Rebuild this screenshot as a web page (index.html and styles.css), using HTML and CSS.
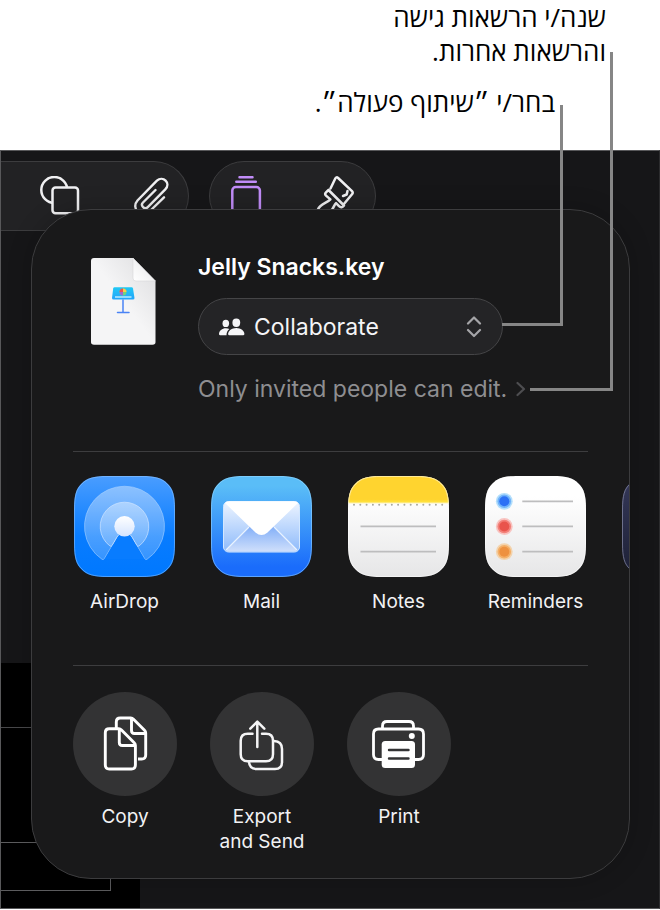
FILE: index.html
```html
<!DOCTYPE html>
<html lang="he">
<head>
    <meta charset="UTF-8">
    <meta name="viewport" content="width=device-width, initial-scale=1.0">
    <title>Jelly Snacks.key</title>
    <link rel="stylesheet" href="styles.css">
</head>
<body>
    <div class="figure">
        <div class="callouts" dir="rtl">
            <p class="callout">שנה/י הרשאות גישה<br>והרשאות אחרות.</p>
            <p class="callout callout-share">בחר/י ״שיתוף פעולה״.</p>
        </div>

        <div class="device">
            <div class="slide"><div class="slide-row"></div><div class="slide-box"></div></div>

            <div class="toolbar">
                <div class="pill pill-left">
                    <button class="tool" aria-label="Shapes">
                        <svg width="40" height="40" viewBox="0 0 40 40" fill="none" stroke="#f0f0f2" stroke-width="2.5">
                            <circle cx="14.3" cy="14" r="13"/>
                            <rect x="12.5" y="11.6" width="25.5" height="25.6" rx="3" fill="#222224"/>
                        </svg>
                    </button>
                    <button class="tool" aria-label="Attach">
                        <svg width="40" height="40" viewBox="0 0 40 40" fill="none" stroke="#f0f0f2" stroke-width="2.4" stroke-linecap="round">
                            <path d="M21.5 14L9 26.5c-3 3.200 1.600 7.800 4.800 4.600L31.300 13.300c6-6-2.400-14.200-8.400-8.600L3.500 24.500c-7 8 4 19 11.500 11.500L30 21.300"/>
                        </svg>
                    </button>
                </div>
                <div class="pill pill-right">
                    <button class="tool" aria-label="Animate">
                        <svg width="40" height="40" viewBox="0 0 40 40" fill="none" stroke="#c18cf8" stroke-width="2.5" stroke-linecap="round">
                            <path d="M13.500 1.200h13M10.300 5.700h19.500"/>
                            <rect x="6.300" y="11" width="27.600" height="34" rx="3.500"/>
                        </svg>
                    </button>
                    <button class="tool" aria-label="Format">
                        <svg width="40" height="40" viewBox="0 0 40 40" fill="none" stroke="#f0f0f2" stroke-width="2.5" stroke-linecap="round" stroke-linejoin="round">
                            <path d="M14.500 12.500L19.300 2.500q1.100-2 2.800-.5L36 15.200q1.500 1.700 0 3L27.500 28.500"/>
                            <path d="M31.500 15l-.8 3.500-3.700 1.500"/>
                            <path d="M12.500 14L28 29.500c-1.500 2-3.400 2.200-5 .6l-3-3c-1.600 1.300-2 4-4.400 7.200M12.500 14l-2.500 2.400q-1.600 1.600 0 3.200l4.400 3.800C11 27.200 4 27.700 2 33.500"/>
                        </svg>
                    </button>
                </div>
            </div>

            <div class="sheet">
                <div class="doc">
                    <svg class="doc-icon" width="65" height="87" viewBox="0 0 65 87">
                        <defs>
                            <linearGradient id="paper" x1="0" y1="1" x2="1" y2="0"><stop offset=".5" stop-color="#f5f5f6"/><stop offset="1" stop-color="#dcdcde"/></linearGradient>
                            <linearGradient id="fold" x1="0" y1="1" x2="1" y2="0"><stop offset="0" stop-color="#fff"/><stop offset=".5" stop-color="#f2f2f3"/></linearGradient>
                            <linearGradient id="podium" x1="0" y1="0" x2="0" y2="1"><stop offset="0" stop-color="#20c8f4"/><stop offset="1" stop-color="#22a4fb"/></linearGradient>
                        </defs>
                        <path d="M3 0h39l22.500 23v61q0 2.700-3 2.700H3q-3 0-3-2.700V3Q0 0 3 0z" fill="url(#paper)"/>
                        <path d="M42 0l22.500 23H45q-3 0-3-3z" fill="url(#fold)" stroke="#d6d6d8" stroke-width=".6"/>
                        <path d="M23.500 29.300h17q1.200 0 1.500 1.200l1.500 9.500q0 1.500-1.500 1.500H22.500q-1.500 0-1.500-1.500l1.200-9.500q.2-1.200 1.300-1.200z" fill="url(#podium)"/>
                        <path d="M24 39h16.500" stroke="#b9eafd" stroke-width="1.500"/>
                        <circle cx="32" cy="34" r="3.500" fill="#73d37c"/>
                        <path d="M32 34v-3.500a3.500 3.500 0 0 0-3.500 3.500z" fill="#f0524f"/>
                        <path d="M32 34h-3.500a3.500 3.500 0 0 0 3.500 3.500z" fill="#9c69cf"/>
                        <path d="M32 34v-3.500a3.500 3.500 0 0 1 3.500 3.500z" fill="#f3ce4c"/>
                        <path d="M32 42v12.500M26.500 54.600h11.500" stroke="#4a83f5" stroke-width="1.500" stroke-linecap="round"/>
                    </svg>
                    <div class="doc-info">
                        <h1 class="doc-name">Jelly Snacks.key</h1>
                        <label class="mode">
                            <svg width="26" height="18" viewBox="0 0 26 18" fill="#f5f5f7">
                                <ellipse cx="6.800" cy="5.400" rx="3.300" ry="3.600"/>
                                <ellipse cx="17.300" cy="4.700" rx="3.900" ry="4.200"/>
                                <path d="M1.200 17.300Q0 17.300 0 16c0-3.200 3.200-5.800 6.800-5.800q2 0 3.600.8c-2 1.500-3 3.600-2.900 6.300z"/>
                                <path d="M10.400 17.300q-1.300 0-1.300-1.300c0-3.300 3.700-6.100 8.200-6.100s8.100 2.800 8.100 6.100q0 1.300-1.300 1.300z"/>
                            </svg>
                            <select class="mode-select" aria-label="Sharing mode">
                                <option>Collaborate</option>
                                <option>Send Copy</option>
                            </select>
                            <svg width="16" height="22" viewBox="0 0 16 22" fill="none" stroke="#a5a5a8" stroke-width="2.200" stroke-linecap="round" stroke-linejoin="round">
                                <path d="M2 7.500L8 1.500l6 6M2 14l6 6 6-6"/>
                            </svg>
                        </label>
                        <a class="access" href="#">Only invited people can edit.
                            <svg width="10" height="16" viewBox="0 0 10 16" fill="none" stroke="#4d4d50" stroke-width="2.200" stroke-linecap="round" stroke-linejoin="round">
                                <path d="M1.500 2l6.500 6-6.500 6"/>
                            </svg>
                        </a>
                    </div>
                </div>

                <hr class="divider">

                <div class="apps">
                    <button class="app">
                        <svg width="101" height="101" viewBox="0 0 101 101">
                            <defs>
                                <clipPath id="tile"><path d="M34 0H67C82 0 88 2 93.500 7.500C99 13 101 19 101 34V67C101 82 99 88 93.500 93.500C88 99 82 101 67 101H34C19 101 13 99 7.500 93.500C2 88 0 82 0 67V34C0 19 2 13 7.500 7.500C13 2 19 0 34 0Z"/></clipPath>
                                <path id="tile-edge" d="M34 .5H67C82 .5 88 2.500 93 8C98.500 13 100.500 19 100.500 34V67C100.500 82 98.500 88 93 93C88 98.500 82 100.500 67 100.500H34C19 100.500 13 98.500 8 93C2.500 88 .5 82 .5 67V34C.5 19 2.500 13 8 8C13 2.500 19 .5 34 .5Z" fill="none"/>
                                <linearGradient id="airdrop" x1="0" y1="0" x2="0" y2="1"><stop offset="0" stop-color="#4a9dff"/><stop offset=".6" stop-color="#087cff"/><stop offset="1" stop-color="#0078ff"/></linearGradient>
                                <linearGradient id="wave" x1="0" y1="0" x2="0" y2="1"><stop offset="0" stop-color="#fff" stop-opacity=".4"/><stop offset="1" stop-color="#fff" stop-opacity=".2"/></linearGradient>
                                <linearGradient id="core" x1="0" y1="0" x2="0" y2="1"><stop offset="0" stop-color="#fff"/><stop offset="1" stop-color="#d4e4ff"/></linearGradient>
                            </defs>
                            <g clip-path="url(#tile)">
                                <path d="M0 0h101v101H0z" fill="url(#airdrop)"/>
                                <path d="M28 83.300A40 40 0 1 1 73 83.300q-1.500 1-2.500-1L57 59.500H44L30.500 82.300q-1 2-2.500 1z" fill="url(#wave)" stroke="#a7d0ff" stroke-opacity=".6"/>
                                <path d="M36 70A24.300 24.300 0 1 1 65 70q-1.200 1-2.200-.7L57 59.500H44L38.200 69.300q-1 1.700-2.200.7z" fill="url(#wave)" stroke="#cfe4ff" stroke-opacity=".7"/>
                                <path d="M45 59L31 83h39L56 59z" fill="#087cff"/>
                                <circle cx="50.500" cy="50.300" r="10.200" fill="url(#core)"/>
                            </g>
                            <use href="#tile-edge" stroke="#9cccff" stroke-opacity=".5"/>
                        </svg>
                        <span class="app-name">AirDrop</span>
                    </button>
                    <button class="app">
                        <svg width="101" height="101" viewBox="0 0 101 101">
                            <defs>
                                <linearGradient id="mail" x1="0" y1="0" x2="0" y2="1"><stop offset=".1" stop-color="#5abdf7"/><stop offset=".9" stop-color="#1a6cfb"/></linearGradient>
                                <linearGradient id="letter" x1="0" y1="0" x2="0" y2="1"><stop offset="0" stop-color="#eef5ff"/><stop offset="1" stop-color="#8dbafb"/></linearGradient>
                                <linearGradient id="letter-base" x1="0" y1="0" x2="0" y2="1"><stop offset="0" stop-color="#84b0f8"/><stop offset="1" stop-color="#cfdffb"/></linearGradient>
                            </defs>
                            <g clip-path="url(#tile)">
                                <path d="M0 0h101v101H0z" fill="url(#mail)"/>
                                <rect x="12.500" y="25.500" width="76" height="50.500" rx="5" fill="url(#letter)" stroke="#d2e7ff"/>
                                <path d="M15 74L38 51h25L86 74q-1 1.500-3 1.500H18q-2 0-3-1.500z" fill="url(#letter-base)"/>
                                <path d="M15 74L38 51M86 74L63 51" stroke="#e9f3ff" stroke-width="1.200"/>
                                <path d="M14 27q1.500-1.700 4-1.700h65q2.500 0 4 1.700L56.500 56.500q-6 5-12 0z" fill="#fff"/>
                            </g>
                            <use href="#tile-edge" stroke="#9fdcff" stroke-opacity=".5"/>
                        </svg>
                        <span class="app-name">Mail</span>
                    </button>
                    <button class="app">
                        <svg width="101" height="101" viewBox="0 0 101 101">
                            <defs>
                                <linearGradient id="page" x1="0" y1="0" x2="0" y2="1"><stop offset=".2" stop-color="#fff"/><stop offset="1" stop-color="#e6e6e7"/></linearGradient>
                                <linearGradient id="band" x1="0" y1="0" x2="0" y2="1"><stop offset=".85" stop-color="#ffd42f"/><stop offset=".93" stop-color="#ffe03a"/><stop offset="1" stop-color="#fff4b8"/></linearGradient>
                            </defs>
                            <g clip-path="url(#tile)">
                                <path d="M0 0h101v101H0z" fill="url(#page)"/>
                                <path d="M0 0h101v27.500H0z" fill="url(#band)"/>
                                <path d="M6 28.800h90" stroke="#a9a9a0" stroke-width="2" stroke-linecap="round" stroke-dasharray="0 6.300"/>
                                <path d="M12.500 50.400h75.500M12.500 75.600h75.500" stroke="#bdbdbe" stroke-width="1.800"/>
                            </g>
                            <use href="#tile-edge" stroke="#fff" stroke-opacity=".5"/>
                        </svg>
                        <span class="app-name">Notes</span>
                    </button>
                    <button class="app">
                        <svg width="101" height="101" viewBox="0 0 101 101">
                            <g clip-path="url(#tile)">
                                <path d="M0 0h101v101H0z" fill="url(#page)"/>
                                <circle cx="19.300" cy="25.300" r="8.400" fill="#b3defb"/><circle cx="19.300" cy="25.300" r="6.800" fill="#6fb2fa"/><circle cx="19.300" cy="25.300" r="5" fill="#2c70f5"/>
                                <circle cx="19.300" cy="50.500" r="8.400" fill="#f8c3c0"/><circle cx="19.300" cy="50.500" r="6.800" fill="#f38079"/><circle cx="19.300" cy="50.500" r="5" fill="#e9544c"/>
                                <circle cx="19.300" cy="75.700" r="8.400" fill="#f3d3ad"/><circle cx="19.300" cy="75.700" r="6.800" fill="#f4af67"/><circle cx="19.300" cy="75.700" r="5" fill="#ee9140"/>
                                <path d="M37.300 25.300H88M37.300 50.400H88M37.300 75.600H88" stroke="#bdbdbe" stroke-width="1.800"/>
                            </g>
                            <use href="#tile-edge" stroke="#fff" stroke-opacity=".5"/>
                        </svg>
                        <span class="app-name">Reminders</span>
                    </button>
                    <button class="app" aria-label="More">
                        <svg width="101" height="101" viewBox="0 0 101 101">
                            <defs>
                                <linearGradient id="night" x1="0" y1="0" x2="0" y2="1"><stop offset="0" stop-color="#353859"/><stop offset="1" stop-color="#1d2035"/></linearGradient>
                            </defs>
                            <g clip-path="url(#tile)"><path d="M0 0h101v101H0z" fill="url(#night)"/></g>
                            <use href="#tile-edge" stroke="#8a8da8" stroke-opacity=".7"/>
                        </svg>
                    </button>
                </div>

                <hr class="divider">

                <div class="actions">
                    <button class="action">
                        <span class="disc">
                            <svg width="104" height="104" viewBox="0 0 104 104" fill="none" stroke="#fff" stroke-width="2.900" stroke-linejoin="round">
                                <path d="M43.300 36v-6q0-4 4-4h10.500q1.500 0 2.700 1.200l11 11q1.200 1.200 1.200 2.900V63q0 4-4 4H65M58.500 26.500v12q0 3 3 3h11"/>
                                <path d="M36.300 36.800h9.500q1.500 0 2.700 1.200l12.700 12.700q1.200 1.200 1.200 2.900V73q0 4-4 4H36.300q-4 0-4-4V40.800q0-4 4-4zM46.300 37v13.500q0 3 3 3H62"/>
                            </svg>
                        </span>
                        <span class="app-name">Copy</span>
                    </button>
                    <button class="action">
                        <span class="disc">
                            <svg width="104" height="104" viewBox="0 0 104 104" fill="none" stroke="#f5f5f6" stroke-width="2.500" stroke-linecap="round" stroke-linejoin="round">
                                <path d="M42.500 41.700h-4.800q-7 0-7 7v13.500q0 7 7 7H56q7 0 7-7V48.700q0-7-7-7h-4"/>
                                <path d="M47.300 55V30M40.300 36.700l7-7 7 7"/>
                                <path d="M64 49q8 .3 8 8V70q0 7-7 7H46.500q-7 0-7.500-7" stroke-linecap="butt"/>
                            </svg>
                        </span>
                        <span class="app-name">Export<br>and Send</span>
                    </button>
                    <button class="action">
                        <span class="disc">
                            <svg width="104" height="104" viewBox="0 0 104 104" fill="none" stroke="#fff" stroke-width="2.800" stroke-linejoin="round">
                                <path d="M35.500 37v-3q0-4.500 4.500-4.500h22q4.500 0 4.500 4.500v3"/>
                                <path d="M35 67.500h-3.500q-5 0-5-5V42q0-5 5-5h40q5 0 5 5v20.500q0 5-5 5H68"/>
                                <rect x="34.700" y="49" width="33.300" height="27" rx="3.500" fill="#fff" stroke="none"/>
                                <path d="M42 58h19.500M42 66.500h19.500" stroke="#333334" stroke-width="2.400" stroke-linecap="round"/>
                                <circle cx="64.800" cy="44" r="3" fill="#fff" stroke="none"/>
                            </svg>
                        </span>
                        <span class="app-name">Print</span>
                    </button>
                </div>
            </div>
        </div>

        <div class="leader leader-access"></div>
        <div class="leader leader-share"></div>
    </div>
</body>
</html>
```

FILE: styles.css
```css
* {
    box-sizing: border-box;
}

body {
    margin: 0;
    background: #fff;
    color: #000;
    font-family: Inter, "Liberation Sans", sans-serif;
}

.figure {
    position: relative;
    display: flex;
    flex-direction: column;
    min-height: 100vh;
    padding-bottom: 1px;
}

/* Callouts */
.callouts {
    min-height: 150px;
    padding-right: 54px;
    font-family: "Open Sans", "Noto Sans", "Liberation Sans", sans-serif;
    font-size: 26px;
    line-height: 34px;
}

.callout {
    margin: 0 0 17px;
}

.callout-share {
    margin-right: 51px;
}

.leader {
    position: absolute;
    border: solid #868686;
    border-width: 0 3px 3px 0;
}

.leader-access {
    top: 52px;
    right: 47px;
    width: 83px;
    height: 339px;
}

.leader-share {
    top: 105px;
    right: 97px;
    width: 61px;
    height: 221px;
}

/* Device */
.device {
    position: relative;
    z-index: 0;
    flex: 1;
    padding-bottom: 28px;
    background: #161618;
    border: 1px solid #58585a;
    border-right-color: #2c2c2e;
}

.slide {
    position: absolute;
    z-index: -1;
    left: 0;
    bottom: 0;
    width: 139px;
    height: 245px;
    padding-top: 64px;
    background: #000;
}

.slide-row {
    height: 115px;
    border-top: 1px solid #48484a;
}

.slide-box {
    width: 110px;
    height: 49px;
    border: solid #5c5c5e;
    border-width: 1px 1px 1px 0;
}

.toolbar {
    display: flex;
    gap: 20px;
    padding-top: 10px;
}

.pill {
    display: flex;
    height: 70px;
    padding-top: 14px;
    background: #222224;
    border: 1px solid #3c3c3e;
    border-radius: 35px;
}

.pill-left {
    gap: 54px;
    padding-left: 39px;
    padding-right: 14px;
    border-left: none;
    border-radius: 0 35px 35px 0;
}

.pill-right {
    gap: 50px;
    padding-left: 16px;
    padding-right: 19px;
}

button {
    display: flex;
    padding: 0;
    background: none;
    border: none;
    color: #f2f2f4;
    font: inherit;
    cursor: pointer;
}

.tool {
    height: 40px;
}

/* Share sheet */
.sheet {
    position: relative;
    margin: -22px 29px 0 30px;
    overflow: hidden;
    background: #19191a;
    border: 1px solid #3c3c3e;
    border-radius: 60px;
    box-shadow: 0 0 24px rgba(0, 0, 0, 0.2);
}

.doc {
    display: flex;
    gap: 42px;
    padding: 42px 126px 47px 59px;
}

.doc-icon {
    flex: none;
    margin-top: 6px;
}

.doc-info {
    flex: 1;
    min-width: 0;
}

.doc-name {
    margin: 0 0 16px;
    color: #fff;
    font-size: 23px;
    font-weight: 600;
    line-height: 30px;
}

.mode {
    display: flex;
    align-items: center;
    gap: 9px;
    height: 57px;
    padding: 0 20px;
    background: #242426;
    border: 1px solid #454547;
    border-radius: 29px;
}

.mode-select {
    flex: 1;
    appearance: none;
    padding: 0;
    background: none;
    border: none;
    color: #f5f5f7;
    font: inherit;
    font-size: 23px;
    line-height: 30px;
}

.access {
    display: inline-flex;
    align-items: center;
    gap: 9px;
    margin-top: 19px;
    color: #8e8e91;
    font-size: 23px;
    line-height: 30px;
    text-decoration: none;
    white-space: nowrap;
}

.divider {
    height: 1px;
    margin: 0 41px;
    background: #3d3d3f;
    border: none;
}

.apps {
    display: flex;
    gap: 36px;
    padding: 24px 0 51px 42px;
    overflow: hidden;
}

.app {
    flex: none;
    flex-direction: column;
    align-items: center;
    gap: 12px;
    width: 101px;
}

.app-name {
    font-size: 19px;
    line-height: 25px;
}

.actions {
    display: flex;
    gap: 33px;
    padding: 26px 41px 24px;
}

.action {
    flex-direction: column;
    align-items: center;
    gap: 8px;
    width: 104px;
}

.disc {
    display: flex;
    background: #333334;
    border-radius: 50%;
}
```
